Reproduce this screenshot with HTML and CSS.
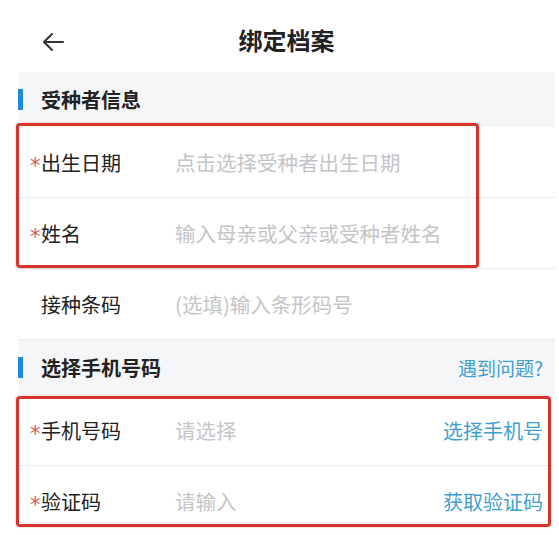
FILE: index.html
```html
<!DOCTYPE html>
<html lang="zh">
<head>
<meta charset="utf-8">
<title>绑定档案</title>
<link rel="stylesheet" href="styles.css">
</head>
<body>
<div class="page">
  <header class="topbar">
    <div class="back">
      <svg width="22" height="20" viewBox="0 0 22 20" fill="none" stroke="#333" stroke-width="2" stroke-linecap="round" stroke-linejoin="round"><path d="M21 10H2M10 2L2 10l8 8"/></svg>
    </div>
    <h1 class="title">绑定档案</h1>
    <div></div>
  </header>

  <div class="section">
    <span class="bar"></span>
    <span class="section-title">受种者信息</span>
  </div>
  <div class="group">
    <div class="row"><span class="star">*</span><span class="label">出生日期</span><span class="ph">点击选择受种者出生日期</span></div>
    <div class="row"><span class="star">*</span><span class="label">姓名</span><span class="ph">输入母亲或父亲或受种者姓名</span></div>
    <div class="mark mark-a"></div>
  </div>
  <div class="row"><span class="star"></span><span class="label">接种条码</span><span class="ph">(选填)输入条形码号</span></div>

  <div class="section">
    <span class="bar"></span>
    <span class="section-title">选择手机号码</span>
    <span class="help">遇到问题?</span>
  </div>
  <div class="group">
    <div class="row"><span class="star">*</span><span class="label">手机号码</span><span class="ph">请选择</span><span class="action">选择手机号</span></div>
    <div class="row"><span class="star">*</span><span class="label">验证码</span><span class="ph">请输入</span><span class="action">获取验证码</span></div>
    <div class="mark mark-b"></div>
  </div>
</div>
</body>
</html>
```

FILE: styles.css
```css
* { box-sizing: border-box; }
html, body { margin: 0; padding: 0; background: #fff; }
body {
  font-family: "Noto Sans CJK SC", "Noto Sans", sans-serif;
  color: #222;
  overflow: hidden;
}
.page {
  margin: 0 4px 0 18px;
}
.topbar {
  height: 72px;
  padding-top: 8px;
  display: grid;
  grid-template-columns: 1fr auto 1fr;
  align-items: center;
}
.back {
  padding-left: 24px;
  display: flex;
  align-items: center;
  padding-top: 3px;
}
.title {
  margin: 0;
  font-size: 24px;
  font-weight: 700;
  color: #222;
  line-height: 1;
}
.section {
  height: 55px;
  background: #f5f6f8;
  display: flex;
  align-items: center;
  padding-right: 12px;
}
.bar {
  width: 5px;
  height: 21px;
  background: #2389dc;
  margin-right: 18px;
}
.section-title {
  font-size: 20px;
  font-weight: 700;
  color: #222;
  flex: 1;
}
.help {
  font-size: 19px;
  color: #3f9fd0;
}
.group { position: relative; }
.row {
  height: 71px;
  border-bottom: 1px solid #ececec;
  display: flex;
  align-items: center;
  padding: 0 12px;
}
.star {
  width: 11px;
  height: 20px;
  color: #d6585e;
  font-size: 21px;
  line-height: 1;
  padding-top: 4px;
  font-family: "DejaVu Sans", sans-serif;
  overflow: visible;
}
.label {
  width: 134px;
  font-size: 20px;
  color: #222;
}
.ph {
  flex: 1;
  font-size: 20.5px;
  color: #c4c5c7;
}
.action {
  font-size: 20px;
  color: #3f9fd0;
}
.mark {
  position: absolute;
  border: 3px solid #d6352c;
  border-radius: 4px;
  box-shadow: 0 0 2px rgba(214, 53, 44, 0.45);
  pointer-events: none;
}
.mark-a { top: -4px; left: -2px; width: 463px; height: 145px; }
.mark-b { top: 1px; left: -2px; width: 535px; height: 131px; }
```
